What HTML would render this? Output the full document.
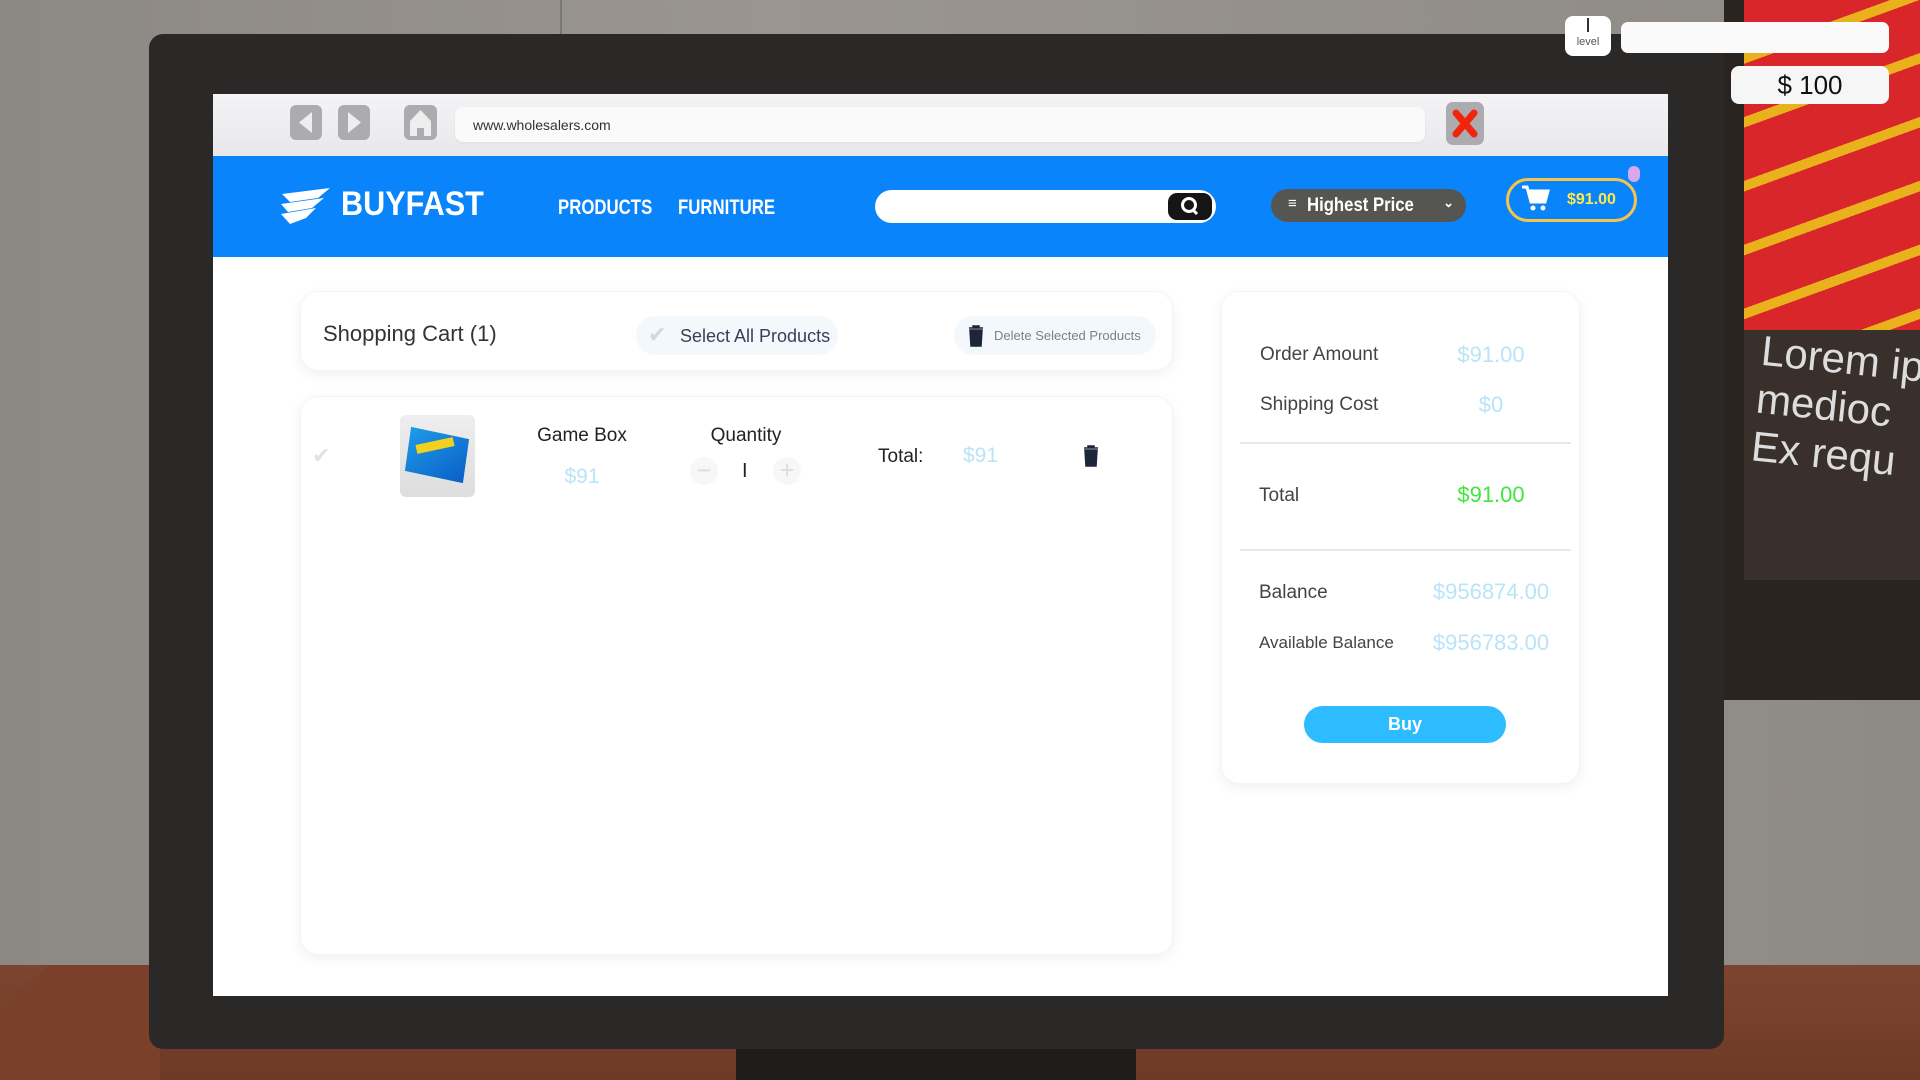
<!DOCTYPE html>
<html><head><meta charset="utf-8"><style>
*{margin:0;padding:0;box-sizing:border-box}
body{width:1920px;height:1080px;overflow:hidden;position:relative;font-family:"Liberation Sans",sans-serif;background:linear-gradient(90deg,#8c8884 0%,#9a9590 40%,#8e8a86 100%)}
.abs{position:absolute}
.desk{left:0;top:965px;width:1920px;height:115px;background:linear-gradient(180deg,#7d4530,#6e3a25)}
.deskL{left:0;top:965px;width:160px;height:115px;background:#7a4029;clip-path:polygon(30% 0,100% 0,100% 100%,0 100%,0 40%)}
.poster{left:1724px;top:0;width:196px;height:700px;background:#2a2420}
.frame{left:149px;top:34px;width:1575px;height:1015px;background:#2b2927;border-radius:14px}
.stand{left:736px;top:1049px;width:400px;height:31px;background:#1e1d1c}
.screen{left:213px;top:94px;width:1455px;height:902px;background:#fff}
.bar{left:213px;top:94px;width:1455px;height:62px;background:linear-gradient(#f4f4f6,#e8e8ec)}
.btn{background:#acacb0;border-radius:6px}
.hdr{left:213px;top:156px;width:1455px;height:101px;background:#0a84fb}
.card{background:#fff;border-radius:18px;box-shadow:0 4px 14px rgba(0,0,0,.06);border:1px solid #f4f4f4}
.pill{background:#f3f8fd;border-radius:20px}
.lbl{font-size:19px;color:#444}
.val{font-size:22px;color:#b9e4f8;text-align:center;width:160px}
.fut{font-family:"Liberation Sans",sans-serif;color:#222}
.cond{transform-origin:left center;display:inline-block}
</style></head><body>
<div class="abs" style="left:560px;top:0;width:2px;height:34px;background:#777"></div>
<div class="abs poster"><div class="abs" style="left:20px;top:0;width:176px;height:330px;background:#d8262a"></div>
<div class="abs" style="left:20px;top:0;width:176px;height:330px;background:repeating-linear-gradient(160deg,transparent 0 50px,#e9b21c 50px 60px)"></div>
<div class="abs" style="left:20px;top:330px;width:176px;height:250px;background:#3a302b"></div>
<div class="abs" style="left:32px;top:335px;font-size:42px;color:#ddd;line-height:48px;transform:rotate(6deg)">Lorem ip<br>medioc<br>Ex requ</div></div>
<div class="abs desk"></div><div class="abs deskL"></div>
<div class="abs stand"></div>
<div class="abs frame"></div>
<div class="abs screen"></div>
<div class="abs bar"></div>
<div class="abs btn" style="left:290px;top:105px;width:32px;height:35px"><svg width="32" height="35"><path d="M22 7L9 17.5 22 28Z" fill="#eee"/></svg></div>
<div class="abs btn" style="left:338px;top:105px;width:32px;height:35px"><svg width="32" height="35"><path d="M10 7L23 17.5 10 28Z" fill="#eee"/></svg></div>
<div class="abs btn" style="left:404px;top:105px;width:33px;height:35px"><svg width="33" height="35"><path d="M16.5 5L6 16v15h7v-8h7v8h7V16Z" fill="#eee"/></svg></div>
<div class="abs" style="left:455px;top:107px;width:970px;height:35px;background:#fafafb;border-radius:8px;box-shadow:0 1px 2px #ddd;font-size:14px;color:#333;padding:10px 18px">www.wholesalers.com</div>
<div class="abs btn" style="left:1446px;top:102px;width:38px;height:43px;border-radius:7px"><svg width="38" height="43"><path d="M10 11L28 32M28 11L10 32" stroke="#f2240c" stroke-width="7" stroke-linecap="round"/></svg></div>
<div class="abs hdr"></div>
<svg class="abs" style="left:278px;top:186px" width="56" height="40"><path d="M4 8L52 2 40 12 12 16ZM3 18L46 12 34 22 10 26ZM3 28L38 22 28 32 12 38Z" fill="#fff"/></svg>
<div class="abs cond" style="left:341px;top:185px;font-size:34px;font-weight:bold;color:#fff;transform:scaleX(0.9)">BUYFAST</div>
<div class="abs cond" style="left:558px;top:196px;font-size:21px;font-weight:bold;color:#fff;transform:scaleX(0.8)">PRODUCTS</div>
<div class="abs cond" style="left:678px;top:196px;font-size:21px;font-weight:bold;color:#fff;transform:scaleX(0.8)">FURNITURE</div>
<div class="abs" style="left:875px;top:190px;width:341px;height:33px;background:#fff;border-radius:17px"></div>
<div class="abs" style="left:1168px;top:193px;width:44px;height:27px;background:#151515;border-radius:9px"><svg width="44" height="27"><circle cx="21" cy="12" r="6.5" stroke="#fff" stroke-width="3" fill="none"/><path d="M25 17l4 4" stroke="#fff" stroke-width="3"/></svg></div>
<div class="abs" style="left:1271px;top:189px;width:195px;height:33px;background:#555652;border-radius:17px;color:#fff;font-size:19px;font-weight:bold;padding:6px 0 0 36px"><span class="cond" style="transform:scaleX(0.88)">Highest Price</span><span style="position:absolute;left:17px;top:6px;font-size:15px">≡</span><span style="position:absolute;right:12px;top:6px;font-size:13px">⌄</span></div>
<div class="abs" style="left:1506px;top:178px;width:131px;height:44px;border:3px solid #f4c54a;border-radius:22px;color:#ffe84a;font-size:16px;font-weight:bold;padding:10px 0 0 58px">$91.00</div>
<svg class="abs" style="left:1520px;top:183px" width="30" height="30"><path d="M2 4h5l4 15h14l3-11H9" stroke="#fff" stroke-width="3" fill="#fff"/><circle cx="13" cy="25" r="2.5" fill="#fff"/><circle cx="23" cy="25" r="2.5" fill="#fff"/></svg>
<div class="abs" style="left:1628px;top:166px;width:12px;height:16px;border-radius:6px;background:#d7a7f0"></div>
<div class="abs" style="left:1565px;top:16px;width:46px;height:40px;background:#fff;border-radius:8px;text-align:center;font-size:20px;line-height:20px;color:#222">I<div style="font-size:11px;line-height:12px;color:#555">level</div></div>
<div class="abs" style="left:1621px;top:22px;width:268px;height:31px;background:#fafafa;border-radius:7px"></div>
<div class="abs" style="left:1731px;top:66px;width:158px;height:38px;background:#f6f6f6;border-radius:8px;text-align:center;font-size:26px;line-height:38px;color:#111">$ 100</div>

<div class="abs card" style="left:300px;top:291px;width:873px;height:80px"></div>
<div class="abs" style="left:323px;top:321px;font-size:22px;color:#333">Shopping Cart (1)</div>
<div class="abs pill" style="left:636px;top:316px;width:202px;height:39px"><span style="position:absolute;left:12px;top:6px;color:#d6d6d6;font-size:22px">✔</span><span style="position:absolute;left:44px;top:10px;font-size:18px;color:#3a3f55">Select All Products</span></div>
<div class="abs pill" style="left:954px;top:316px;width:202px;height:39px"><svg style="position:absolute;left:14px;top:9px" width="16" height="22"><path d="M1 3h14M5 3V1h6v2M2 5h12l-1 16H3Z" fill="#1d2638" stroke="#1d2638" stroke-width="1.5"/></svg><span style="position:absolute;left:40px;top:12px;font-size:13px;color:#7a8090">Delete Selected Products</span></div>
<div class="abs card" style="left:300px;top:396px;width:873px;height:559px"></div>
<div class="abs" style="left:312px;top:443px;color:#e2e2e2;font-size:22px">✔</div>
<div class="abs" style="left:400px;top:415px;width:75px;height:82px;border-radius:6px;background:linear-gradient(#eee,#ddd)"><div style="position:absolute;left:8px;top:18px;width:58px;height:44px;background:linear-gradient(135deg,#1e9be8,#0b5fc7);transform:skew(-8deg,12deg)"></div><div style="position:absolute;left:16px;top:26px;width:38px;height:9px;background:#f2d11e;transform:rotate(-12deg)"></div></div>
<div class="abs fut" style="left:532px;top:425px;width:100px;text-align:center;font-size:19px">Game Box</div>
<div class="abs" style="left:532px;top:465px;width:100px;text-align:center;font-size:21px;color:#b9e4f8">$91</div>
<div class="abs fut" style="left:686px;top:425px;width:120px;text-align:center;font-size:19px">Quantity</div>
<div class="abs" style="left:690px;top:457px;width:28px;height:28px;border-radius:14px;background:#f7f7f7;color:#ddd;font-size:26px;text-align:center;line-height:26px">−</div>
<div class="abs" style="left:742px;top:460px;font-size:20px;color:#222">I</div>
<div class="abs" style="left:773px;top:457px;width:28px;height:28px;border-radius:14px;background:#f7f7f7;color:#ddd;font-size:26px;text-align:center;line-height:26px">+</div>
<div class="abs fut" style="left:878px;top:446px;font-size:19px">Total:</div>
<div class="abs" style="left:963px;top:444px;font-size:21px;color:#b9e4f8">$91</div>
<svg class="abs" style="left:1083px;top:445px" width="16" height="22"><path d="M1 3h14M5 3V1h6v2M2 5h12l-1 16H3Z" fill="#1d2638" stroke="#1d2638" stroke-width="1.5"/></svg>

<div class="abs card" style="left:1221px;top:291px;width:359px;height:493px"></div>
<div class="abs lbl" style="left:1260px;top:344px">Order Amount</div><div class="abs val" style="left:1411px;top:342px">$91.00</div>
<div class="abs lbl" style="left:1260px;top:394px">Shipping Cost</div><div class="abs val" style="left:1411px;top:392px">$0</div>
<div class="abs" style="left:1240px;top:442px;width:331px;height:2px;background:#e8e8e8"></div>
<div class="abs lbl" style="left:1259px;top:485px">Total</div><div class="abs val" style="left:1411px;top:482px;color:#3ee63e">$91.00</div>
<div class="abs" style="left:1240px;top:549px;width:331px;height:2px;background:#e8e8e8"></div>
<div class="abs lbl" style="left:1259px;top:582px">Balance</div><div class="abs val" style="left:1411px;top:579px;width:160px">$956874.00</div>
<div class="abs lbl" style="left:1259px;top:633px;font-size:17px">Available Balance</div><div class="abs val" style="left:1411px;top:630px">$956783.00</div>
<div class="abs" style="left:1304px;top:706px;width:202px;height:37px;background:#2cbcff;border-radius:19px;color:#fff;text-align:center;font-size:18px;font-weight:bold;line-height:37px">Buy</div>
</body></html>
